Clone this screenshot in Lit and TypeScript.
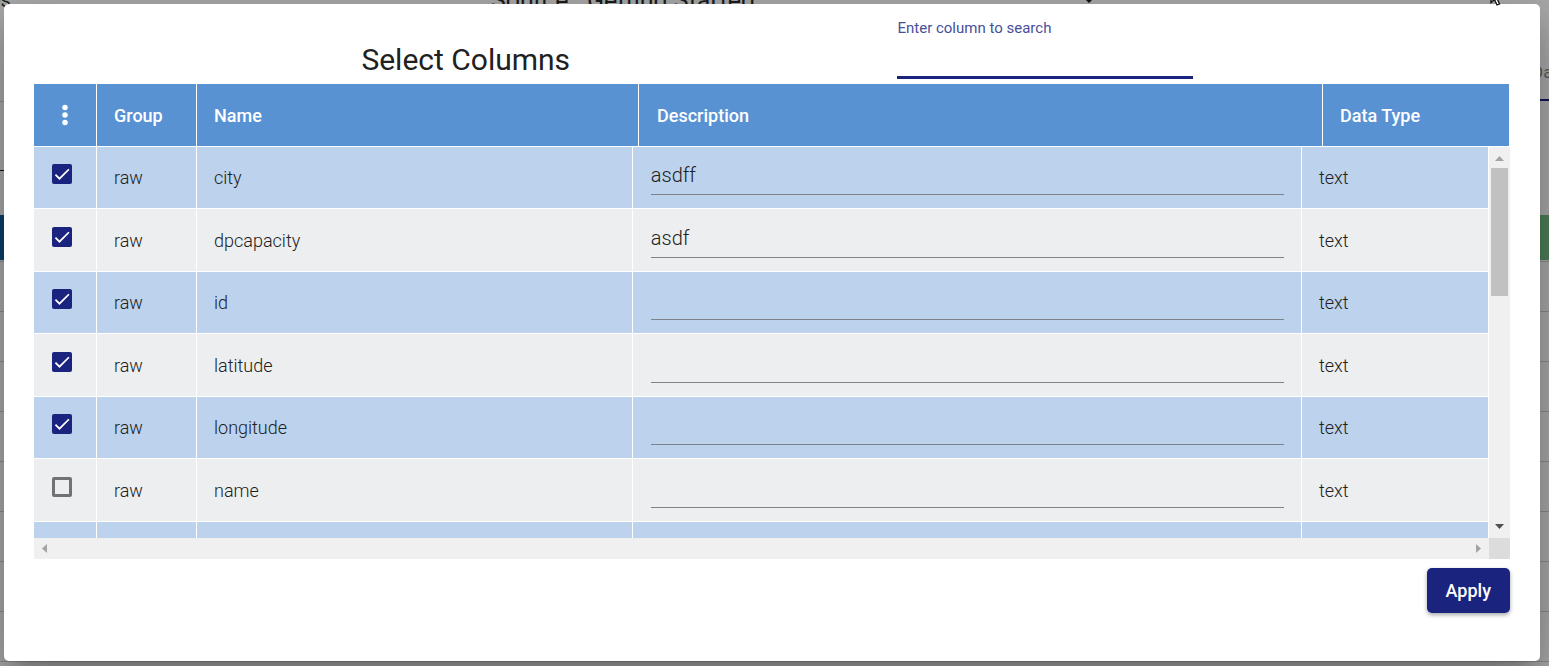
import { LitElement, html, css, svg } from "lit";
import { customElement, state } from "lit/decorators.js";

interface ColumnRow {
  group: string;
  name: string;
  description: string;
  type: string;
  selected: boolean;
}

const arrow = (direction: string) => {
  const shapes: Record<string, string> = {
    up: "M6 14h9l-4.5-5z",
    down: "M6 7h9l-4.5 5z",
    left: "M13 6v9l-5-4.5z",
    right: "M8 6v9l5-4.5z",
  };
  return html`<svg class="arrow ${direction}" viewBox="0 0 21 21" aria-hidden="true">
    ${svg`<path d=${shapes[direction]} fill="currentColor"></path>`}
  </svg>`;
};

@customElement("page-backdrop")
export class PageBackdrop extends LitElement {
  static styles = css`
    :host {
      display: block;
      position: absolute;
      inset: 0;
      overflow: hidden;
      background: #a9a9a9;
      color: #1c1c1c;
      font-family: Roboto, sans-serif;
    }
    .piece { position: absolute; white-space: nowrap; }
    .menu { left: -10px; top: -12px; font-size: 20px; line-height: 24px; }
    .source { left: 491px; top: -12px; font-size: 25px; line-height: 26px; white-space: pre; }
    .caret { left: 1083px; top: -3px; width: 12px; height: 6px; }
    .tab { left: 1532px; top: 62px; font-size: 17px; line-height: 20px; color: #5c5c5c; }
    .ink { right: 0; top: 99px; width: 12px; height: 2px; background: #10165a; }
    .toolbar { left: 0; right: 0; top: 215px; height: 45px; background: linear-gradient(90deg, #0a4068 50%, #4d7d58 50%); }
    .rule { left: 0; width: 4px; top: 170px; height: 1px; background: #111; }
    .lines {
      left: 0;
      right: 0;
      top: 261px;
      bottom: 0;
      background: repeating-linear-gradient(#8a8a8a 0 1px, transparent 1px 50px);
    }
    .top-line { left: 0; width: 4px; top: 101px; height: 1px; background: #8c8c8c; }
  `;

  render() {
    return html`
      <span class="piece menu">es</span>
      <span class="piece source">Source   Getting Started</span>
      <svg class="piece caret" viewBox="0 0 12 6"><path d="M0 0h12L6 6z" fill="#111"></path></svg>
      <span class="piece top-line"></span>
      <span class="piece tab">Data</span>
      <span class="piece ink"></span>
      <span class="piece rule"></span>
      <span class="piece toolbar"></span>
      <span class="piece lines"></span>
    `;
  }
}

@customElement("column-picker")
export class ColumnPicker extends LitElement {
  @state() private rows: ColumnRow[] = [
    { group: "raw", name: "city", description: "asdff", type: "text", selected: true },
    { group: "raw", name: "dpcapacity", description: "asdf", type: "text", selected: true },
    { group: "raw", name: "id", description: "", type: "text", selected: true },
    { group: "raw", name: "latitude", description: "", type: "text", selected: true },
    { group: "raw", name: "longitude", description: "", type: "text", selected: true },
    { group: "raw", name: "name", description: "", type: "text", selected: false },
  ];

  static styles = css`
    :host {
      display: flex;
      flex-direction: column;
      box-sizing: border-box;
      padding: 0 30px 48px;
      border-radius: 5px;
      background: #fff;
      color: #212121;
      font-family: Roboto, sans-serif;
      box-shadow:
        0 14px 19px -9px rgba(0, 0, 0, 0.2),
        0 30px 48px 4px rgba(0, 0, 0, 0.14),
        0 11px 58px 10px rgba(0, 0, 0, 0.12);
    }
    * { box-sizing: border-box; }
    .top {
      display: grid;
      grid-template-columns: 1fr 20% 21.5%;
      height: 80px;
    }
    .title {
      margin: 0;
      padding-top: 36px;
      font-size: 30px;
      line-height: 40px;
      font-weight: 400;
      text-align: center;
    }
    .search { display: flex; flex-direction: column; padding-top: 14px; }
    .search label { font-size: 15px; line-height: 20px; color: #474f9a; }
    .search input {
      width: 100%;
      height: 41px;
      padding: 0;
      border: 0;
      border-bottom: 3px solid #1a237e;
      outline: 0;
      background: none;
      font: 400 20px/24px Roboto, sans-serif;
    }
    table {
      width: 100%;
      border-spacing: 0;
      table-layout: fixed;
      font-size: 18px;
      line-height: 24px;
    }
    .c-check { width: 63px; }
    .c-group { width: 100px; }
    .c-name { width: 29.95%; }
    .c-type { width: 187px; }
    th, td {
      padding: 0 17px;
      border-right: 1px solid #fff;
      border-bottom: 1px solid #fff;
      text-align: left;
      vertical-align: middle;
      overflow: hidden;
    }
    th { height: 63px; padding-top: 2px; background: #5892d3; color: #fff; font-weight: 500; }
    th:last-child { padding-right: 0; }
    th:first-child { padding: 0; text-align: center; }
    td { height: 63px; padding-top: 1px; background: #edeef0; font-weight: 300; }
    tr:nth-child(odd) td { height: 62px; padding-top: 0; background: #bcd2ed; }
    td:first-child, th:nth-child(4), td:nth-child(4) { padding-left: 18px; }
    .more {
      padding: 0;
      border: 0;
      background: none;
      color: #fff;
      vertical-align: middle;
    }
    .more svg { display: block; width: 30px; height: 30px; }
    .check { display: block; position: relative; width: 20px; height: 20px; margin-bottom: 8px; }
    .check input {
      display: block;
      appearance: none;
      width: 20px;
      height: 20px;
      margin: 0;
      border: 3px solid #717274;
      border-radius: 2px;
    }
    .check input:checked { border: 0; background: #1a237e; }
    .check svg { position: absolute; inset: 0; width: 20px; height: 20px; pointer-events: none; }
    .desc {
      display: block;
      width: 100%;
      height: 40px;
      margin-bottom: 6px;
      padding: 2px 0 0;
      border: 0;
      border-bottom: 1px solid #7f8389;
      border-radius: 0;
      outline: 0;
      background: none;
      color: #212121;
      font: 300 20px/24px Roboto, sans-serif;
    }
    .grid {
      display: grid;
      grid-template-columns: 1fr 21px;
      grid-template-rows: 391px 21px;
    }
    .view { overflow: hidden; }
    .bar { display: flex; justify-content: space-between; background: #f0f0f0; }
    .vertical { flex-direction: column; }
    .thumb { flex: 0 0 128px; margin: 0 2px auto; background: #c1c1c1; }
    .arrow { display: block; flex: none; width: 21px; height: 21px; color: #a3a3a3; }
    .down { color: #505050; }
    .corner { background: #dcdcdc; }
    .actions { display: flex; justify-content: flex-end; padding-top: 9px; }
    .apply {
      height: 45px;
      padding: 0 19px;
      border: 0;
      border-radius: 5px;
      background: #1a237e;
      color: #fff;
      font: 500 18px/24px Roboto, sans-serif;
      box-shadow: 0 2px 4px rgba(0, 0, 0, 0.35);
    }
  `;

  private toggle(index: number) {
    this.rows = this.rows.map((row, i) => (i === index ? { ...row, selected: !row.selected } : row));
  }

  private columns() {
    return html`<colgroup>
      <col class="c-check" /><col class="c-group" /><col class="c-name" /><col /><col class="c-type" />
    </colgroup>`;
  }

  render() {
    return html`
      <header class="top">
        <h2 class="title">Select Columns</h2>
        <div class="search">
          <label for="search">Enter column to search</label>
          <input id="search" type="text" />
        </div>
      </header>
      <table>
        ${this.columns()}
        <thead>
          <tr>
            <th>
              <button class="more" aria-label="More options">
                <svg viewBox="0 0 24 24" fill="currentColor">
                  <circle cx="12" cy="6" r="2.2"></circle>
                  <circle cx="12" cy="12" r="2.2"></circle>
                  <circle cx="12" cy="18" r="2.2"></circle>
                </svg>
              </button>
            </th>
            <th>Group</th>
            <th>Name</th>
            <th>Description</th>
            <th>Data Type</th>
          </tr>
        </thead>
      </table>
      <div class="grid">
        <div class="view">
          <table>
            ${this.columns()}
            <tbody>
              ${this.rows.map(
                (row, i) => html`<tr>
                  <td>
                    <span class="check">
                      <input
                        type="checkbox"
                        aria-label=${row.name}
                        .checked=${row.selected}
                        @change=${() => this.toggle(i)}
                      />
                      ${row.selected
                        ? html`<svg viewBox="0 0 24 24" fill="none" stroke="#fff" stroke-width="2.1">
                            <path d="M4.1 12.7 9 17.6 20.3 6.3"></path>
                          </svg>`
                        : null}
                    </span>
                  </td>
                  <td>${row.group}</td>
                  <td>${row.name}</td>
                  <td>
                    <input class="desc" type="text" aria-label="Description of ${row.name}" .value=${row.description} />
                  </td>
                  <td>${row.type}</td>
                </tr>`
              )}
              <tr><td></td><td></td><td></td><td></td><td></td></tr>
            </tbody>
          </table>
        </div>
        <div class="bar vertical">${arrow("up")}<div class="thumb"></div>${arrow("down")}</div>
        <div class="bar">${arrow("left")}${arrow("right")}</div>
        <div class="corner"></div>
      </div>
      <footer class="actions"><button class="apply">Apply</button></footer>
    `;
  }
}

@customElement("app-root")
export class AppRoot extends LitElement {
  static styles = css`
    :host {
      display: block;
      position: relative;
      box-sizing: border-box;
      min-height: 100vh;
      padding: 4px 9px 5px 4px;
      overflow: hidden;
    }
    .dialog { position: relative; }
    .pointer { position: absolute; left: 1489px; top: -13px; width: 14px; height: 19px; pointer-events: none; }
  `;

  render() {
    return html`
      <page-backdrop aria-hidden="true"></page-backdrop>
      <column-picker class="dialog" role="dialog" aria-label="Select Columns"></column-picker>
      <svg class="pointer" viewBox="0 0 14 19" aria-hidden="true">
        <path d="M2 1v14.500l3.500-3 2.500 5.500 2.500-1-2.500-5.500h4.500z" fill="#fff" stroke="#111" stroke-width="1.300"></path>
      </svg>
    `;
  }
}
